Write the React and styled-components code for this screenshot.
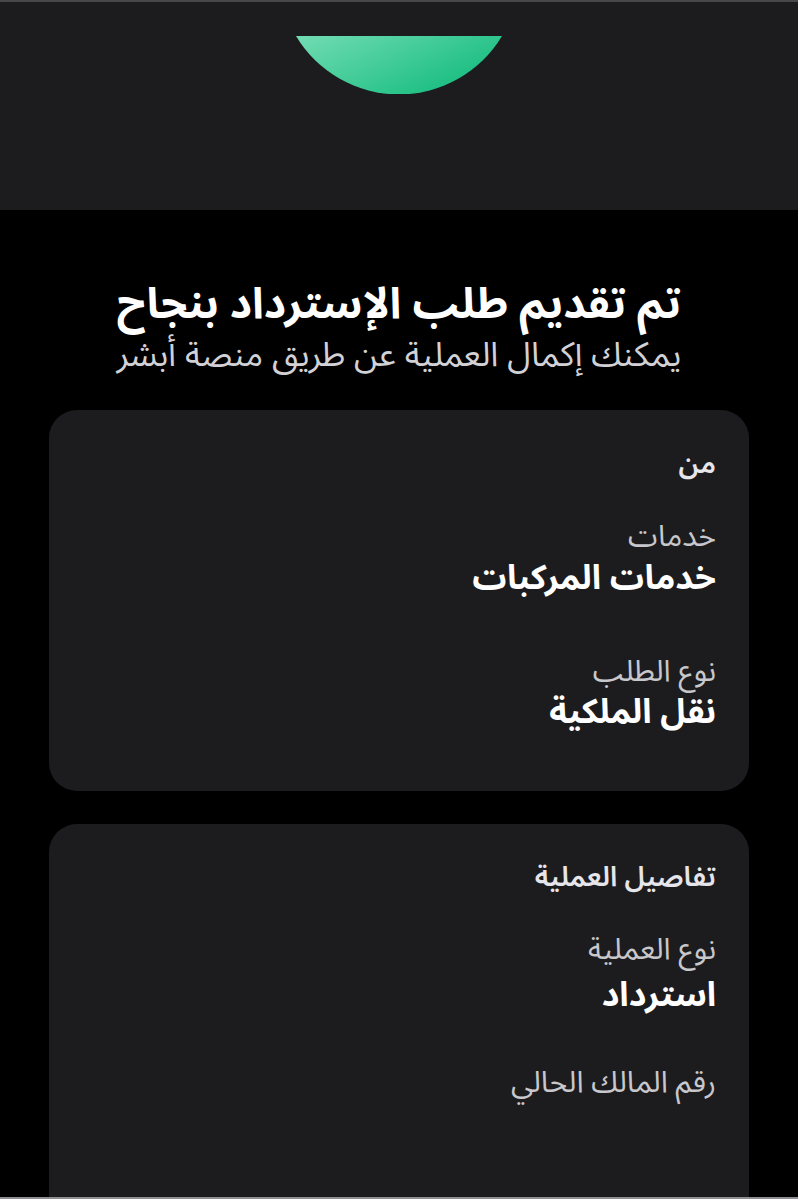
import React from "react";
import styled, { createGlobalStyle } from "styled-components";

const GlobalStyle = createGlobalStyle`
  html, body {
    margin: 0;
    padding: 0;
    background: #000;
  }
  body {
    font-family: "Noto Sans Arabic", "Noto Sans", "DejaVu Sans", sans-serif;
  }
`;

const Page = styled.div`
  direction: rtl;
  height: 1199px;
  overflow: hidden;
  box-sizing: border-box;
  background: #000;
  border-bottom: 2px solid #8e8e93;
`;

const Header = styled.header`
  height: 210px;
  box-sizing: border-box;
  background: #1c1c1e;
  border-top: 2px solid #48484a;
  display: flex;
  justify-content: center;
  padding-top: 34px;
`;

const Intro = styled.div`
  text-align: center;
  padding: 70px 0 32px;
`;

const Title = styled.h1`
  margin: 0;
  color: #fff;
  font-size: 43px;
  font-weight: 700;
  line-height: 50px;
`;

const Subtitle = styled.p`
  margin: 2px 0 0;
  color: #d1d1d6;
  font-size: 34px;
  font-weight: 400;
  line-height: 46px;
`;

const Card = styled.section`
  margin: 0 49px 33px;
  background: #1c1c1e;
  border-radius: 28px;
  padding: ${(p) => p.$top}px 33px 59px;
  min-height: ${(p) => p.$minHeight || 0}px;
`;

const CardTitle = styled.h2`
  margin: 0;
  color: #e5e5ea;
  font-size: 28px;
  font-weight: 600;
  line-height: 36px;
`;

const Field = styled.div`
  margin-top: ${(p) => p.$gap}px;
`;

const Label = styled.div`
  color: #c7c7cc;
  font-size: 30px;
  font-weight: 400;
  line-height: 38px;
`;

const Value = styled.div`
  margin-top: ${(p) => p.$gap}px;
  color: #fff;
  font-size: 34px;
  font-weight: 700;
  line-height: 40px;
`;

function SuccessArc() {
  return (
    <svg width="206" height="58" viewBox="0 0 206 58">
      <defs>
        <linearGradient id="arcGrad" x1="0" y1="0" x2="1" y2="0.6">
          <stop offset="0" stopColor="#72dcb3" />
          <stop offset="1" stopColor="#17bd80" />
        </linearGradient>
      </defs>
      <path d="M0 0 H206 A120 120 0 0 1 0 0 Z" fill="url(#arcGrad)" />
    </svg>
  );
}

export default function App() {
  return (
    <>
      <GlobalStyle />
      <Page>
        <Header>
          <SuccessArc />
        </Header>
        <Intro>
          <Title>تم تقديم طلب الإسترداد بنجاح</Title>
          <Subtitle>يمكنك إكمال العملية عن طريق منصة أبشر</Subtitle>
        </Intro>
        <Card $top={37}>
          <CardTitle>من</CardTitle>
          <Field $gap={35}>
            <Label>خدمات</Label>
            <Value $gap={2}>خدمات المركبات</Value>
          </Field>
          <Field $gap={55}>
            <Label>نوع الطلب</Label>
            <Value $gap={1}>نقل الملكية</Value>
          </Field>
        </Card>
        <Card $top={36} $minHeight={420}>
          <CardTitle>تفاصيل العملية</CardTitle>
          <Field $gap={35}>
            <Label>نوع العملية</Label>
            <Value $gap={6}>استرداد</Value>
          </Field>
          <Field $gap={49}>
            <Label>رقم المالك الحالي</Label>
          </Field>
        </Card>
      </Page>
    </>
  );
}
